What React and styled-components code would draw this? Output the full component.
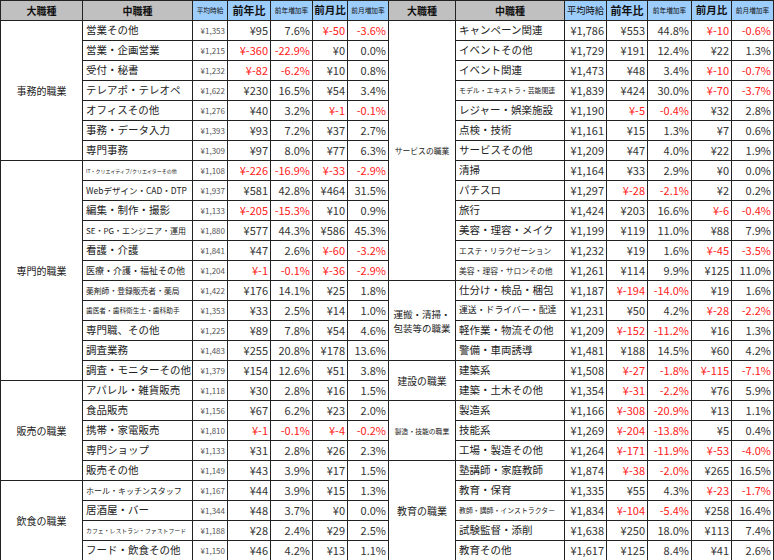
import React from "react";
import styled, { createGlobalStyle } from "styled-components";

const Global = createGlobalStyle`
  html, body { margin: 0; padding: 0; background: #fff; }
  body { font-family: "Noto Sans CJK JP", "Noto Sans", sans-serif; color: #333; }
`;

const Table = styled.table`
  border-collapse: collapse;
  table-layout: fixed;
  width: 773px;
  border: 1px solid #222;
`;

const Row = styled.tr`
  height: 20px;
`;

const HeadCell = styled.th`
  height: 19px;
  padding: 0;
  border: 1px solid #222;
  background: ${(p) => (p.$tone === "gray" ? "#c0c0c0" : "#9dcdfb")};
  color: #111;
  font-weight: ${(p) => (p.$small ? 400 : 700)};
  font-size: ${(p) => p.$size || 11}px;
  white-space: nowrap;
  overflow: hidden;
  text-align: center;
  line-height: 1;
`;

const CatCell = styled.td`
  padding: 0 2px;
  border: 1px solid #222;
  font-size: ${(p) => p.$size || 10}px;
  line-height: 14px;
  text-align: center;
  vertical-align: middle;
  color: #222;
  white-space: ${(p) => (p.$wrap ? "normal" : "nowrap")};
`;

const NameCell = styled.td`
  padding: 0 0 0 3px;
  border: 1px solid #222;
  font-size: ${(p) => p.$size || 10.5}px;
  line-height: 1;
  text-align: left;
  white-space: nowrap;
  overflow: hidden;
  color: #222;
`;

const NumCell = styled.td`
  padding: 0 2px 0 0;
  border: 1px solid #222;
  font-size: ${(p) => (p.$small ? 8 : 11)}px;
  line-height: 1;
  text-align: right;
  white-space: nowrap;
  overflow: hidden;
  color: ${(p) => (p.$neg ? "#ff2020" : p.$small ? "#555" : "#333")};
`;

const left = [
  {
    cat: "事務的職業",
    rows: [
      ["営業その他", "¥1,353", "¥95", "7.6%", "¥-50", "-3.6%"],
      ["営業・企画営業", "¥1,215", "¥-360", "-22.9%", "¥0", "0.0%"],
      ["受付・秘書", "¥1,232", "¥-82", "-6.2%", "¥10", "0.8%"],
      ["テレアポ・テレオペ", "¥1,622", "¥230", "16.5%", "¥54", "3.4%"],
      ["オフィスその他", "¥1,276", "¥40", "3.2%", "¥-1", "-0.1%"],
      ["事務・データ入力", "¥1,393", "¥93", "7.2%", "¥37", "2.7%"],
      ["専門事務", "¥1,309", "¥97", "8.0%", "¥77", "6.3%"],
    ],
  },
  {
    cat: "専門的職業",
    rows: [
      ["IT・クリエイティブ/クリエイターその他", "¥1,108", "¥-226", "-16.9%", "¥-33", "-2.9%", 5],
      ["Webデザイン・CAD・DTP", "¥1,937", "¥581", "42.8%", "¥464", "31.5%", 8.5],
      ["編集・制作・撮影", "¥1,133", "¥-205", "-15.3%", "¥10", "0.9%"],
      ["SE・PG・エンジニア・運用", "¥1,880", "¥577", "44.3%", "¥586", "45.3%", 8],
      ["看護・介護", "¥1,841", "¥47", "2.6%", "¥-60", "-3.2%"],
      ["医療・介護・福祉その他", "¥1,204", "¥-1", "-0.1%", "¥-36", "-2.9%", 9],
      ["薬剤師・登録販売者・薬局", "¥1,422", "¥176", "14.1%", "¥25", "1.8%", 7.8],
      ["歯医者・歯科衛生士・歯科助手", "¥1,353", "¥33", "2.5%", "¥14", "1.0%", 6.7],
      ["専門職、その他", "¥1,225", "¥89", "7.8%", "¥54", "4.6%"],
      ["調査業務", "¥1,483", "¥255", "20.8%", "¥178", "13.6%"],
      ["調査・モニターその他", "¥1,379", "¥154", "12.6%", "¥51", "3.8%"],
    ],
  },
  {
    cat: "販売の職業",
    rows: [
      ["アパレル・雑貨販売", "¥1,118", "¥30", "2.8%", "¥16", "1.5%"],
      ["食品販売", "¥1,156", "¥67", "6.2%", "¥23", "2.0%"],
      ["携帯・家電販売", "¥1,810", "¥-1", "-0.1%", "¥-4", "-0.2%"],
      ["専門ショップ", "¥1,133", "¥31", "2.8%", "¥26", "2.3%"],
      ["販売その他", "¥1,149", "¥43", "3.9%", "¥17", "1.5%"],
    ],
  },
  {
    cat: "飲食の職業",
    rows: [
      ["ホール・キッチンスタッフ", "¥1,167", "¥44", "3.9%", "¥15", "1.3%", 8],
      ["居酒屋・バー", "¥1,344", "¥48", "3.7%", "¥0", "0.0%"],
      ["カフェ・レストラン・ファストフード", "¥1,188", "¥28", "2.4%", "¥29", "2.5%", 5.9],
      ["フード・飲食その他", "¥1,150", "¥46", "4.2%", "¥13", "1.1%"],
    ],
  },
];

const right = [
  {
    cat: "サービスの職業",
    size: 7.8,
    rows: [
      ["キャンペーン関連", "¥1,786", "¥553", "44.8%", "¥-10", "-0.6%"],
      ["イベントその他", "¥1,729", "¥191", "12.4%", "¥22", "1.3%"],
      ["イベント関連", "¥1,473", "¥48", "3.4%", "¥-10", "-0.7%"],
      ["モデル・エキストラ・芸能関連", "¥1,839", "¥424", "30.0%", "¥-70", "-3.7%", 6.9],
      ["レジャー・娯楽施設", "¥1,190", "¥-5", "-0.4%", "¥32", "2.8%"],
      ["点検・技術", "¥1,161", "¥15", "1.3%", "¥7", "0.6%"],
      ["サービスその他", "¥1,209", "¥47", "4.0%", "¥22", "1.9%"],
      ["清掃", "¥1,164", "¥33", "2.9%", "¥0", "0.0%"],
      ["パチスロ", "¥1,297", "¥-28", "-2.1%", "¥2", "0.2%"],
      ["旅行", "¥1,424", "¥203", "16.6%", "¥-6", "-0.4%"],
      ["美容・理容・メイク", "¥1,199", "¥119", "11.0%", "¥88", "7.9%"],
      ["エステ・リラクゼーション", "¥1,232", "¥19", "1.6%", "¥-45", "-3.5%", 7.7],
      ["美容・理容・サロンその他", "¥1,261", "¥114", "9.9%", "¥125", "11.0%", 7.8],
    ],
  },
  {
    cat: "運搬・清掃・包装等の職業",
    size: 9.5,
    wrap: true,
    rows: [
      ["仕分け・検品・梱包", "¥1,187", "¥-194", "-14.0%", "¥19", "1.6%"],
      ["運送・ドライバー・配達", "¥1,231", "¥50", "4.2%", "¥-28", "-2.2%", 8.9],
      ["軽作業・物流その他", "¥1,209", "¥-152", "-11.2%", "¥16", "1.3%"],
      ["警備・車両誘導", "¥1,481", "¥188", "14.5%", "¥60", "4.2%"],
    ],
  },
  {
    cat: "建設の職業",
    size: 9.8,
    rows: [
      ["建築系", "¥1,508", "¥-27", "-1.8%", "¥-115", "-7.1%"],
      ["建築・土木その他", "¥1,354", "¥-31", "-2.2%", "¥76", "5.9%"],
    ],
  },
  {
    cat: "製造・技能の職業",
    size: 6.8,
    rows: [
      ["製造系", "¥1,166", "¥-308", "-20.9%", "¥13", "1.1%"],
      ["技能系", "¥1,269", "¥-204", "-13.8%", "¥5", "0.4%"],
      ["工場・製造その他", "¥1,264", "¥-171", "-11.9%", "¥-53", "-4.0%"],
    ],
  },
  {
    cat: "教育の職業",
    size: 10,
    rows: [
      ["塾講師・家庭教師", "¥1,874", "¥-38", "-2.0%", "¥265", "16.5%"],
      ["教育・保育", "¥1,335", "¥55", "4.3%", "¥-23", "-1.7%"],
      ["教師・講師・インストラクター", "¥1,834", "¥-104", "-5.4%", "¥258", "16.4%", 6.9],
      ["試験監督・添削", "¥1,638", "¥250", "18.0%", "¥113", "7.4%"],
      ["教育その他", "¥1,617", "¥125", "8.4%", "¥41", "2.6%"],
    ],
  },
];

const flatten = (groups) =>
  groups.flatMap((g) =>
    g.rows.map((r, i) => ({ ...g, first: i === 0, span: g.rows.length, r }))
  );

const widths = [82, 110, 35, 43, 42, 35, 41, 67, 109, 42, 41, 44, 40, 42];

const isNeg = (v) => v.includes("-");

function Half({ item, smallAvg }) {
  const [name, avg, yDiff, yRate, mDiff, mRate, size] = item.r;
  return (
    <>
      {item.first && (
        <CatCell rowSpan={item.span} $size={item.size} $wrap={item.wrap}>
          {item.cat}
        </CatCell>
      )}
      <NameCell $size={size}>{name}</NameCell>
      <NumCell $small={smallAvg}>{avg}</NumCell>
      <NumCell $neg={isNeg(yDiff)}>{yDiff}</NumCell>
      <NumCell $neg={isNeg(yRate)}>{yRate}</NumCell>
      <NumCell $neg={isNeg(mDiff)}>{mDiff}</NumCell>
      <NumCell $neg={isNeg(mRate)}>{mRate}</NumCell>
    </>
  );
}

function HeadHalf({ avgSize }) {
  return (
    <>
      <HeadCell $tone="gray" $size={10}>大職種</HeadCell>
      <HeadCell $tone="gray" $size={10}>中職種</HeadCell>
      <HeadCell $small $size={avgSize}>平均時給</HeadCell>
      <HeadCell $size={11}>前年比</HeadCell>
      <HeadCell $small $size={6.7}>前年増加率</HeadCell>
      <HeadCell $size={10.5}>前月比</HeadCell>
      <HeadCell $small $size={6.7}>前月増加率</HeadCell>
    </>
  );
}

export default function App() {
  const L = flatten(left);
  const R = flatten(right);
  return (
    <>
      <Global />
      <Table>
        <colgroup>
          {widths.map((w, i) => (
            <col key={i} style={{ width: w }} />
          ))}
        </colgroup>
        <thead>
          <Row>
            <HeadHalf avgSize={6.7} />
            <HeadHalf avgSize={9.3} />
          </Row>
        </thead>
        <tbody>
          {L.map((l, i) => (
            <Row key={i}>
              <Half item={l} smallAvg />
              <Half item={R[i]} />
            </Row>
          ))}
        </tbody>
      </Table>
    </>
  );
}
